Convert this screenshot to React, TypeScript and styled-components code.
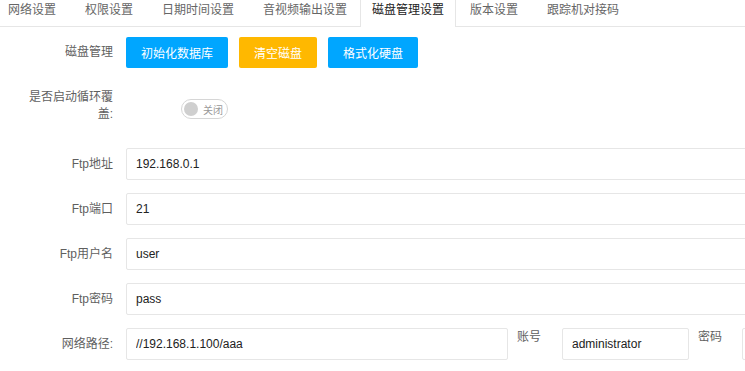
import styled, { createGlobalStyle } from "styled-components";

const GlobalStyles = createGlobalStyle`
  html, body {
    margin: 0;
    background: #fff;
    overflow: hidden;
  }
  body {
    font-family: "Liberation Sans", "Noto Sans CJK SC", sans-serif;
    font-size: 12px;
    color: #333;
  }
  *, *:before, *:after {
    box-sizing: border-box;
  }
`;

const tabs = [
  "网络设置",
  "权限设置",
  "日期时间设置",
  "音视频输出设置",
  "磁盘管理设置",
  "版本设置",
  "跟踪机对接码",
];

function App() {
  return (
    <Page>
      <GlobalStyles />
      <TabBar>
        {tabs.map((t) => (
          <Tab key={t} $active={t === "磁盘管理设置"}>
            {t}
          </Tab>
        ))}
      </TabBar>

      <Form>
        <Row $top={10}>
          <Label>磁盘管理</Label>
          <ButtonGroup>
            <Button $color="#00a6ff">初始化数据库</Button>
            <Button $color="#ffb800">清空磁盘</Button>
            <Button $color="#00a6ff">格式化硬盘</Button>
          </ButtonGroup>
        </Row>

        <Row $top={21} $start>
          <Label>是否启动循环覆盖:</Label>
          <Switch>
            <Knob />
            <SwitchText>关闭</SwitchText>
          </Switch>
        </Row>

        <Row $top={25}>
          <Label>Ftp地址</Label>
          <Input $width={660} defaultValue="192.168.0.1" />
        </Row>
        <Row $top={13}>
          <Label>Ftp端口</Label>
          <Input $width={660} defaultValue="21" />
        </Row>
        <Row $top={13}>
          <Label>Ftp用户名</Label>
          <Input $width={660} defaultValue="user" />
        </Row>
        <Row $top={13}>
          <Label>Ftp密码</Label>
          <Input $width={660} defaultValue="pass" />
        </Row>
        <Row $top={13}>
          <Label>网络路径:</Label>
          <Input $width={382} defaultValue="//192.168.1.100/aaa" />
          <InlineLabel $left={9} $right={21}>
            账号
          </InlineLabel>
          <Input $width={127} defaultValue="administrator" />
          <InlineLabel $left={9} $right={20}>
            密码
          </InlineLabel>
          <Input $width={200} defaultValue="" />
        </Row>
      </Form>
    </Page>
  );
}

export default App;

const Page = styled.div`
  width: 745px;
  height: 371px;
  overflow: hidden;
`;

const TabBar = styled.div`
  display: flex;
  height: 27px;
  border-bottom: 1px solid #e6e6e6;
  margin-left: -7px;
`;

const Tab = styled.div<{ $active?: boolean }>`
  flex: none;
  height: ${(p) => (p.$active ? "27px" : "26px")};
  line-height: 21px;
  padding: ${(p) => (p.$active ? "0 11px" : "0 13px 0 14px")};
  white-space: nowrap;
  color: ${(p) => (p.$active ? "#222" : "#666")};
  background: #fff;
  border-left: 1px solid ${(p) => (p.$active ? "#e6e6e6" : "transparent")};
  border-right: 1px solid ${(p) => (p.$active ? "#e6e6e6" : "transparent")};
  margin: 0 ${(p) => (p.$active ? "-1px" : "0")};
  position: relative;
  z-index: ${(p) => (p.$active ? 1 : 0)};
`;

const Form = styled.div`
  display: flex;
  flex-direction: column;
`;

const Row = styled.div<{ $top: number; $start?: boolean }>`
  display: flex;
  align-items: ${(p) => (p.$start ? "flex-start" : "center")};
  margin-top: ${(p) => p.$top}px;
  white-space: nowrap;
`;

const Label = styled.div`
  flex: none;
  width: 85px;
  margin-left: 28px;
  margin-right: 13px;
  text-align: right;
  line-height: 17px;
  color: #5f5f5f;
  white-space: normal;
`;

const ButtonGroup = styled.div`
  display: flex;
  gap: 11px;
`;

const Button = styled.button<{ $color: string }>`
  height: 31px;
  padding: 0 15px;
  border: none;
  border-radius: 2px;
  background: ${(p) => p.$color};
  color: #fff;
  font: inherit;
  font-size: 12px;
  cursor: pointer;
`;

const Switch = styled.div`
  display: flex;
  align-items: center;
  width: 47px;
  height: 20px;
  margin-top: 10px;
  margin-left: 55px;
  padding-left: 2px;
  border: 1px solid #d6d6d6;
  border-radius: 10px;
`;

const Knob = styled.span`
  width: 14px;
  height: 14px;
  border-radius: 50%;
  background: #cfcfcf;
`;

const SwitchText = styled.span`
  margin-left: 5px;
  font-size: 10px;
  color: #999;
`;

const Input = styled.input<{ $width: number }>`
  flex: none;
  width: ${(p) => p.$width}px;
  height: 32px;
  padding: 0 9px;
  border: 1px solid #e6e6e6;
  border-radius: 2px;
  font: inherit;
  font-size: 12px;
  color: #222;
  outline: none;
`;

const InlineLabel = styled.span<{ $left: number; $right: number }>`
  align-self: flex-start;
  margin: 0 ${(p) => p.$right}px 0 ${(p) => p.$left}px;
  line-height: 18px;
  color: #5f5f5f;
`;
